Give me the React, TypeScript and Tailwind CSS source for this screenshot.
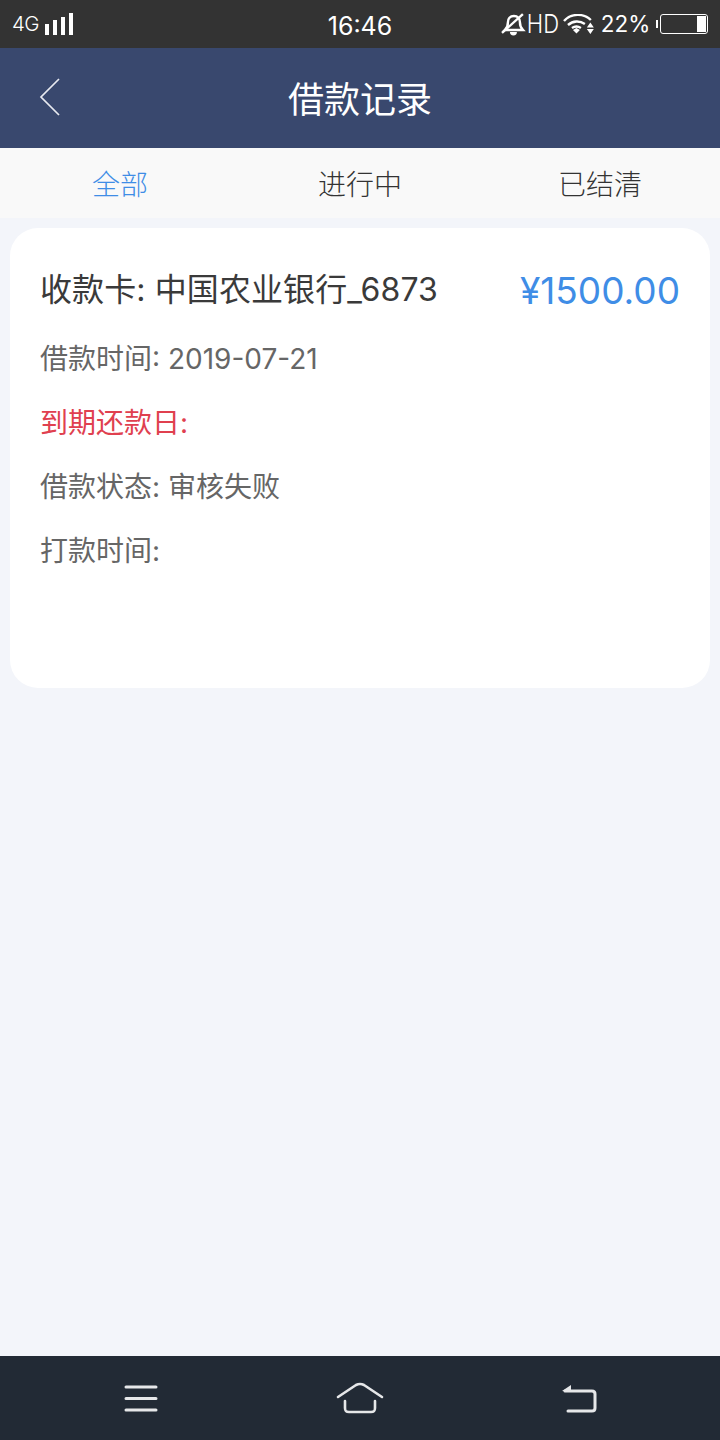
import React, { useState } from 'react';

const tabs = ['全部', '进行中', '已结清'];

function StatusBar() {
  return (
    <div className="h-[48px] bg-[#333333] flex items-center justify-between text-white px-[12px]">
      <div className="flex items-center w-[208px] gap-[6px]">
        <span className="text-[20.500px] leading-none tracking-[-0.6px] font-light">4G</span>
        <div className="flex items-end gap-[3.5px] h-[22px]">
          <div className="w-[4.5px] h-[11px] bg-white" />
          <div className="w-[4.5px] h-[15px] bg-white" />
          <div className="w-[4.5px] h-[18px] bg-white" />
          <div className="w-[4.5px] h-[22px] bg-white" />
        </div>
      </div>
      <span className="text-[25px] leading-none pt-[5px]">16:46</span>
      <div className="flex items-center justify-end w-[208px]">
        <svg width="26" height="26" viewBox="0 0 26 26" fill="none" stroke="white" strokeWidth="2.4">
          <path d="M5 19c2-2 3-4 3-8 0-3 2-6 6-6s6 3 6 6c0 4 1 6 3 8z" />
          <path d="M2 22L23 3" />
          <path d="M10 21a3.500 3.500 0 0 0 7 0z" fill="white" stroke="none" />
        </svg>
        <span className="w-[28px] ml-[3px] flex justify-center">
          <span className="text-[26px] leading-none whitespace-nowrap font-light scale-x-[0.85]">HD</span>
        </span>
        <svg className="ml-[6px]" width="31" height="20" viewBox="0 0 31 20" fill="none" stroke="white" strokeWidth="2.4">
          <path d="M1 7C8-1 21-1 28 6" />
          <path d="M5 11c5-4.500 12-4.500 17-1" />
          <path d="M9 14c3-2 6-2 9 0" />
          <path d="M10 16l3.500-2 3.500 2-3.500 3.500z" fill="white" stroke="none" />
          <path d="M24 13.500l3.500-5 3.500 5zM24 15h7l-3.500 5z" fill="white" stroke="none" />
        </svg>
        <span className="text-[22.500px] leading-none ml-[7px]">22%</span>
        <div className="ml-[6px] w-[2px] h-[8px] bg-white" />
        <div className="ml-[2px] w-[48px] h-[20px] border border-white rounded-[3px] flex justify-end p-[1px]">
          <div className="w-[9px] h-full bg-white" />
        </div>
      </div>
    </div>
  );
}

function Header() {
  return (
    <div className="h-[100px] bg-[#39486e] relative flex items-center justify-center pt-[3px]">
      <svg className="absolute left-[38px] top-[29px]" width="24" height="40" viewBox="0 0 24 40" fill="none" stroke="#e8eaf0" strokeWidth="1.7">
        <path d="M21 2L3 20l18 18" />
      </svg>
      <span className="text-[36px] leading-none text-white">借款记录</span>
    </div>
  );
}

function BottomNav() {
  return (
    <div className="h-[84px] bg-[#222a35] flex items-center justify-center gap-[176px]">
      <svg width="36" height="28" viewBox="0 0 36 28" fill="none" stroke="#e6e7e9" strokeWidth="3" strokeLinecap="round">
        <path d="M3 3h30M3 14.500h30M3 26h30" />
      </svg>
      <svg width="50" height="34" viewBox="0 0 50 34" fill="none" stroke="#e6e7e9" strokeWidth="2.6" strokeLinecap="round" strokeLinejoin="round">
        <path d="M3 16L21 4c3-1.500 5-1.500 8 0l18 12" />
        <path d="M10 20v7c0 3 1 4 4 4h22c3 0 4-1 4-4v-7" />
      </svg>
      <svg width="36" height="30" viewBox="0 0 36 30" fill="none" stroke="#e6e7e9" strokeWidth="3" strokeLinecap="round" strokeLinejoin="round">
        <path d="M4 8h27c2 0 3 1 3 3v14c0 2-1 3-3 3H7" />
        <path d="M1 8l9-6v7z" fill="#e6e7e9" stroke="none" />
      </svg>
    </div>
  );
}

export default function App() {
  const [active, setActive] = useState(0);

  return (
    <div className="w-[720px] h-[1440px] flex flex-col bg-[#f3f5fa] font-['Inter','Noto_Sans_CJK_SC',sans-serif]">
      <StatusBar />
      <Header />

      <div className="h-[70px] bg-[#f9f9f9] flex">
        {tabs.map((t, i) => (
          <button
            key={t}
            onClick={() => setActive(i)}
            className={`flex-1 text-[28px] leading-none pt-[3px] font-light ${i === active ? 'text-[#3f8de6]' : 'text-[#333333]'}`}
          >
            {t}
          </button>
        ))}
      </div>

      <div className="flex-1 px-[10px] pt-[10px]">
        <div className="h-[460px] bg-white rounded-[28px] px-[30px] pt-[40px]">
          <div className="flex items-center justify-between h-[44px]">
            <span className="text-[32px] leading-none text-[#3a3a3a] tracking-[0.1px]">收款卡: 中国农业银行_6873</span>
            <span className="text-[37px] leading-none text-[#3f8de6] pt-[1px]">¥1500.00</span>
          </div>
          <div className="mt-[27px] flex flex-col gap-[24px] text-[28px] leading-[40px] text-[#666666]">
            <div>借款时间: 2019-07-21</div>
            <div className="text-[#e0404f]">到期还款日:</div>
            <div>借款状态: 审核失败</div>
            <div>打款时间:</div>
          </div>
        </div>
      </div>

      <BottomNav />
    </div>
  );
}
